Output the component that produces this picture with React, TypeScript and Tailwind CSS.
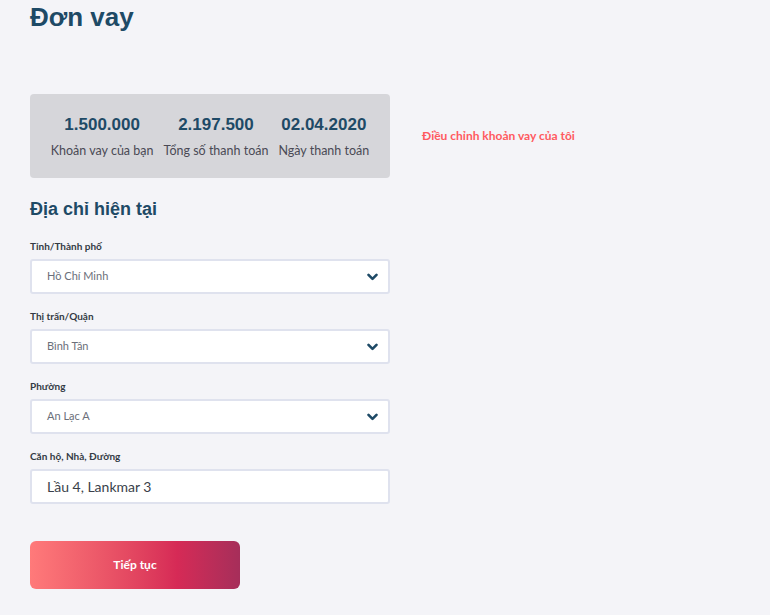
const selects = [
  { label: "Tỉnh/Thành phố", value: "Hồ Chí Minh" },
  { label: "Thị trấn/Quận", value: "Bình Tân" },
  { label: "Phường", value: "An Lạc A" },
];

const stats = [
  { value: "1.500.000", label: "Khoản vay của bạn" },
  { value: "2.197.500", label: "Tổng số thanh toán" },
  { value: "02.04.2020", label: "Ngày thanh toán" },
];

function Chevron() {
  return (
    <svg className="w-[11px] h-[8px]" viewBox="0 0 11 8" fill="none">
      <path d="M1.5 1.8 5.5 5.8 9.5 1.8" stroke="#1e4a66" strokeWidth={2.6} strokeLinecap="round" strokeLinejoin="round" />
    </svg>
  );
}

export default function App() {
  return (
    <div className="min-h-[615px] w-full bg-[#f4f4f8] px-[30px] pt-[4px] font-['Lato','Noto_Sans',sans-serif]">
      <h1 className="font-['Liberation_Sans',Arial,sans-serif] text-[26px] leading-[26px] font-bold text-[#1e4a66]">
        Đơn vay
      </h1>

      <div className="mt-[64px] flex items-center gap-[32px]">
        <div className="flex w-[360px] h-[84px] justify-center gap-[10px] rounded-[4px] bg-[#d6d6da] pt-[21px]">
          {stats.map((s) => (
            <div key={s.value} className="flex flex-col items-center">
              <span className="font-['Liberation_Sans',Arial,sans-serif] text-[17px] leading-[20px] font-bold text-[#1e4a66]">
                {s.value}
              </span>
              <span className="mt-[8px] text-[12.5px] leading-[16px] whitespace-nowrap text-[#4a4a55]">
                {s.label}
              </span>
            </div>
          ))}
        </div>
        <a className="text-[12px] font-bold text-[#ff5a5f]">Điều chỉnh khoản vay của tôi</a>
      </div>

      <h2 className="mt-[20px] font-['Liberation_Sans',Arial,sans-serif] text-[18px] leading-[22px] font-bold text-[#1e4a66]">
        Địa chỉ hiện tại
      </h2>

      <div className="mt-[16px] flex w-[360px] flex-col">
        {selects.map((s) => (
          <div key={s.label} className="mb-[12px]">
            <div className="h-[20px] text-[10px] leading-[20px] font-bold text-[#333a44]">{s.label}</div>
            <div className="mt-[3px] flex h-[35px] items-center justify-between rounded-[3px] border-2 border-[#dfe2ee] bg-white pl-[15px] pr-[10px]">
              <span className="text-[11px] text-[#6b6f7a]">{s.value}</span>
              <Chevron />
            </div>
          </div>
        ))}
        <div>
          <div className="h-[20px] text-[10px] leading-[20px] font-bold text-[#333a44]">Căn hộ, Nhà, Đường</div>
          <div className="mt-[3px] flex h-[35px] items-center rounded-[3px] border-2 border-[#dfe2ee] bg-white pl-[15px]">
            <span className="text-[14px] text-[#3a3f4a]">Lầu 4, Lankmar 3</span>
          </div>
        </div>
      </div>

      <button className="mt-[37px] flex h-[48px] w-[210px] items-center justify-center rounded-[6px] bg-linear-to-r from-[#ff7a7a] via-[#d62a56] via-70% to-[#a62e5a] text-[12px] font-bold text-white">
        Tiếp tục
      </button>
    </div>
  );
}
